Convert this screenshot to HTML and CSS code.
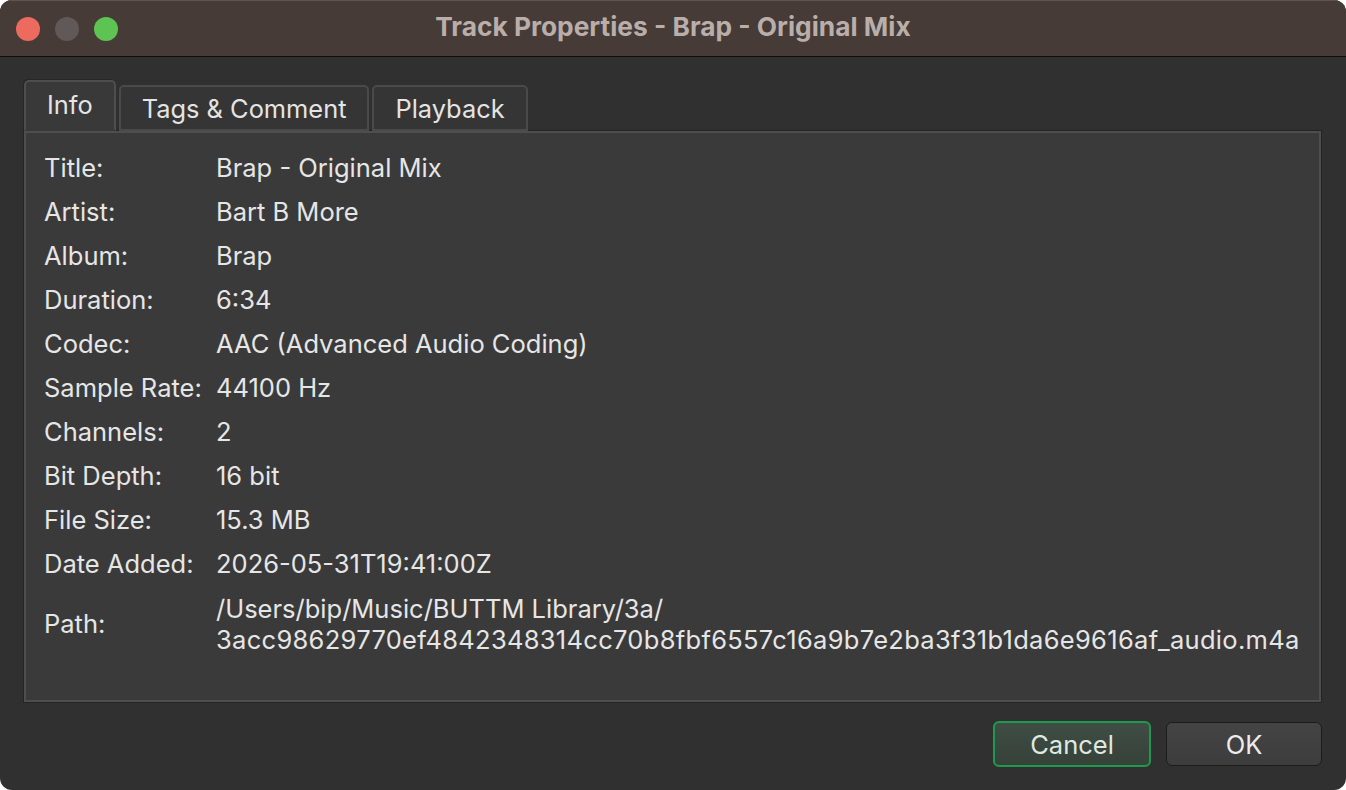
FILE: index.html
```html
<!DOCTYPE html>
<html>
<head>
<meta charset="utf-8">
<link rel="stylesheet" href="styles.css">
</head>
<body>
<div class="window">
  <div class="titlebar">
    <div class="lights">
      <span class="light red"></span>
      <span class="light gray"></span>
      <span class="light green"></span>
    </div>
    <div class="title">Track Properties - Brap - Original Mix</div>
    <div></div>
  </div>
  <div class="content">
    <div class="tabs">
      <div class="tab active">Info</div>
      <div class="tab">Tags &amp; Comment</div>
      <div class="tab">Playback</div>
    </div>
    <div class="panel">
      <div class="grid">
        <div class="label">Title:</div><div class="value">Brap - Original Mix</div>
        <div class="label">Artist:</div><div class="value">Bart B More</div>
        <div class="label">Album:</div><div class="value">Brap</div>
        <div class="label">Duration:</div><div class="value">6:34</div>
        <div class="label">Codec:</div><div class="value">AAC (Advanced Audio Coding)</div>
        <div class="label">Sample Rate:</div><div class="value">44100 Hz</div>
        <div class="label">Channels:</div><div class="value">2</div>
        <div class="label">Bit Depth:</div><div class="value">16 bit</div>
        <div class="label">File Size:</div><div class="value">15.3 MB</div>
        <div class="label">Date Added:</div><div class="value">2026-05-31T19:41:00Z</div>
        <div class="label path-label">Path:</div><div class="value path">/Users/bip/Music/BUTTM Library/3a/<br><span class="hash">3acc98629770ef4842348314cc70b8fbf6557c16a9b7e2ba3f31b1da6e9616af_audio.m4a</span></div>
      </div>
    </div>
    <div class="buttons">
      <button class="btn cancel">Cancel</button>
      <button class="btn ok">OK</button>
    </div>
  </div>
</div>
</body>
</html>
```

FILE: styles.css
```css
html, body {
  margin: 0;
  padding: 0;
  background: #ffffff;
}
body {
  font-family: Inter, "Liberation Sans", sans-serif;
  -webkit-font-smoothing: antialiased;
}
.window {
  width: 1346px;
  height: 790px;
  border-radius: 12px;
  overflow: hidden;
  background: #303030;
  display: flex;
  flex-direction: column;
}
.titlebar {
  flex: 0 0 auto;
  background: #463b36;
  border-top: 1px solid #5e5450;
  border-bottom: 1px solid #0e0e0e;
  box-sizing: border-box;
  height: 57px;
  display: grid;
  grid-template-columns: 1fr auto 1fr;
  align-items: center;
}
.lights {
  display: flex;
  gap: 15px;
  padding-left: 16px;
}
.light {
  width: 24px;
  height: 24px;
  border-radius: 50%;
  display: block;
}
.light.red { background: #ed6a5e; }
.light.gray { background: #615957; }
.light.green { background: #5dc352; }
.title {
  color: #b9aea9;
  font-weight: 700;
  font-size: 26.3px;
  line-height: 1;
  padding-bottom: 3px;
}
.content {
  flex: 1;
  display: flex;
  flex-direction: column;
  padding: 23px 24px 23px 23px;
}
.tabs {
  display: flex;
  align-items: flex-end;
  gap: 3px;
  padding-left: 1px;
  height: 51px;
  margin-bottom: -1px;
  position: relative;
  z-index: 1;
}
.tab {
  box-sizing: border-box;
  height: 46px;
  padding: 0 21px;
  display: flex;
  align-items: center;
  font-size: 25.4px;
  color: #e4e4e4;
  background: #353535;
  border: 2px solid #4a4a4a;
  border-radius: 5px 5px 0 0;
}
.tab.active {
  height: 51px;
  padding: 0 21px 2px;
  background: #393939;
  border-color: #4e4e4e;
  border-bottom-color: #393939;
  box-shadow: -1px -1px 0 #262626;
}
.panel {
  height: 573px;
  box-sizing: border-box;
  background: #3a3a3a;
  border: 1px solid #242424;
  box-shadow: inset 0 0 0 2px #4e4e4e;
  padding: 15px 20px 0 20px;
}
.grid {
  display: grid;
  grid-template-columns: 172px 1fr;
  color: #e6e6e6;
  font-size: 25.5px;
}
.label, .value {
  height: 44px;
  line-height: 44px;
  white-space: nowrap;
}
.path-label {
  height: 76px;
  line-height: 76px;
}
.value.path {
  height: 76px;
  line-height: 31px;
  padding-top: 7px;
  box-sizing: border-box;
}
.hash {
  letter-spacing: 0.3px;
}
.buttons {
  display: flex;
  justify-content: flex-end;
  gap: 15px;
  margin-top: 18px;
}
.btn {
  font-family: Inter, "Liberation Sans", sans-serif;
  font-size: 25.5px;
  box-sizing: border-box;
  height: 46px;
  border-radius: 6px;
  cursor: default;
}
.btn.cancel {
  width: 158px;
  color: #dfe9e1;
  background: linear-gradient(#3f4d44, #374239);
  border: 2px solid #1e9a4e;
}
.btn.ok {
  width: 156px;
  height: 44px;
  margin-top: 1px;
  color: #ececec;
  background: linear-gradient(#444444, #3d3d3d);
  border: 1px solid #1c1c1c;
}
```
